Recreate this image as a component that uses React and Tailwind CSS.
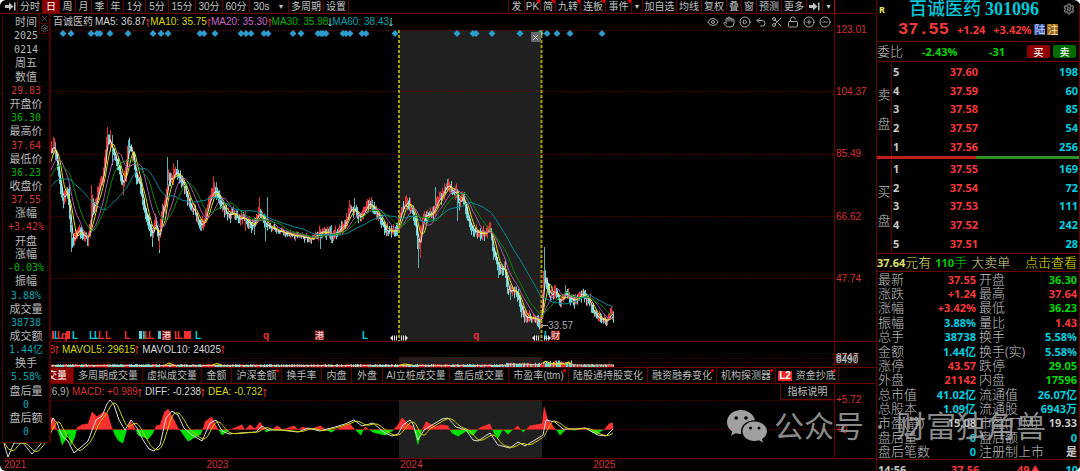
import { CirclePlay, CircleMinus, CirclePlus, Eye, Hand, LockOpen, Scissors, Settings, Undo2, X } from 'lucide-react';

const PERIODS = [
    { label: '分时', width: 'w-[25px]' },
    { label: '日', width: 'w-[17px]', active: true },
    { label: '周', width: 'w-4' },
    { label: '月', width: 'w-4' },
    { label: '季', width: 'w-4' },
    { label: '年', width: 'w-4' },
    { label: '1分', width: 'w-[22px]' },
    { label: '5分', width: 'w-[23px]' },
    { label: '15分', width: 'w-[27px]' },
    { label: '30分', width: 'w-[27px]' },
    { label: '60分', width: 'w-[27px]' },
    { label: '30s', width: 'w-[39px]', menu: true },
    { label: '多周期', width: 'w-[35px]' },
    { label: '设置', width: 'w-[25px]' },
];

const TOOLS = [
    { label: '发', width: 'w-4' },
    { label: 'PK', width: 'w-4', hot: true },
    { label: '简', width: 'w-[15px]', hot: true },
    { label: '九转', width: 'w-[25px]', hot: true },
    { label: '连板', width: 'w-[25px]', hot: true },
    { label: '事件', width: 'w-[26px]', hot: true },
    { label: '▼', width: 'w-[11px]', small: true },
    { label: '加自选', width: 'w-[34px]' },
    { label: '均线', width: 'w-[25px]' },
    { label: '复权', width: 'w-[25px]' },
    { label: '叠', width: 'w-[15px]' },
    { label: '窗', width: 'w-[15px]' },
    { label: '预测', width: 'w-[25px]' },
    { label: '更多', width: 'w-[25px]' },
];

const AVERAGES = [
    { text: 'MA5: 36.87', color: 'text-[#d8d8d8]', up: true },
    { text: 'MA10: 35.75', color: 'text-[#d8d800]', up: true },
    { text: 'MA20: 35.30', color: 'text-[#cc66cc]', up: true },
    { text: 'MA30: 35.98', color: 'text-[#00b400]', up: false },
    { text: 'MA60: 38.43', color: 'text-[#00a5b4]', up: false },
];

const DAY_DATA = [
    ['时间'], ['2025'], ['0214'], ['周五'],
    ['数值'], ['29.83', 'text-[#d83030]'],
    ['开盘价'], ['36.30', 'text-[#00b400]'],
    ['最高价'], ['37.64', 'text-[#d83030]'],
    ['最低价'], ['36.23', 'text-[#00b400]'],
    ['收盘价'], ['37.55', 'text-[#d83030]'],
    ['涨幅'], ['+3.42%', 'text-[#d83030]'],
    ['开盘'], ['涨幅'], ['-0.03%', 'text-[#00b400]'],
    ['振幅'], ['3.88%', 'text-[#00a5b4]'],
    ['成交量'], ['38738', 'text-[#00a5b4]'],
    ['成交额'], ['1.44亿', 'text-[#00a5b4]'],
    ['换手'], ['5.58%', 'text-[#00a5b4]'],
    ['盘后量'], ['0', 'text-[#00a5b4]'],
    ['盘后额'], ['0', 'text-[#00a5b4]'],
];

const TABS = [
    { label: '成交量', width: 'w-[71px]', active: true },
    { label: '多周期成交量', width: 'w-[69px]' },
    { label: '虚拟成交量', width: 'w-[59px]' },
    { label: '金额', width: 'w-[30px]' },
    { label: '沪深金额', width: 'w-[50px]', dot: true },
    { label: '换手率', width: 'w-10' },
    { label: '内盘', width: 'w-[30px]' },
    { label: '外盘', width: 'w-[31px]' },
    { label: 'AI立桩成交量', width: 'w-[67px]' },
    { label: '盘后成交量', width: 'w-[59px]' },
    { label: '市盈率(ttm)', width: 'w-[60px]', dot: true },
    { label: '陆股通持股变化', width: 'w-[79px]' },
    { label: '融资融券变化', width: 'w-[69px]', dot: true },
    { label: '机构探测器', width: 'w-[59px]', dot: true },
    { label: '资金抄底', width: 'w-[63px]', dot: true, level2: true },
];

const SELL = [['5', '37.60', '198'], ['4', '37.59', '60'], ['3', '37.58', '85'], ['2', '37.57', '54'], ['1', '37.56', '256']];
const BUY = [['1', '37.55', '169'], ['2', '37.54', '72'], ['3', '37.53', '111'], ['4', '37.52', '242'], ['5', '37.51', '28']];

const RED = 'text-[#f83838]';
const GREEN = 'text-[#00d800]';
const CYAN = 'text-[#00d0e0]';
const GREY = 'text-[#c8c8c8]';

const STATS = [
    ['最新', '37.55', RED, '开盘', '36.30', GREEN],
    ['涨跌', '+1.24', RED, '最高', '37.64', RED],
    ['涨幅', '+3.42%', RED, '最低', '36.23', GREEN],
    ['振幅', '3.88%', CYAN, '量比', '1.43', RED],
    ['总手', '38738', CYAN, '换手', '5.58%', CYAN],
    ['金额', '1.44亿', CYAN, '换手(实)', '5.58%', CYAN],
    ['涨停', '43.57', RED, '跌停', '29.05', GREEN],
    ['外盘', '21142', RED, '内盘', '17596', GREEN],
    ['总市值', '41.02亿', CYAN, '流通值', '26.07亿', CYAN],
    ['总股本', '1.09亿', CYAN, '流通股', '6943万', CYAN],
    ['市盈(静)', '15.08', GREY, '市盈(TTM)', '19.33', GREY],
    ['盘后量', '0', CYAN, '盘后额', '0', CYAN],
    ['盘后笔数', '0', CYAN, '注册制上市', '是', GREY],
];

// key points of the close price, [x, y] on the chart canvas
const PRICE = [
    [3, 200], [30, 192], [45, 172], [50, 150], [54, 146], [58, 168], [61, 190], [63, 200], [66, 190], [69, 198], [70, 225], [72, 242],
    [75, 238], [78, 228], [82, 234], [88, 239], [90, 226], [92, 202], [94, 210], [98, 193], [103, 175], [106, 150], [107, 134], [109, 142],
    [111, 145], [114, 155], [118, 165], [123, 188], [126, 170], [128, 145], [131, 150], [134, 160], [136, 180], [140, 182], [143, 205], [148, 222],
    [152, 236], [155, 222], [159, 242], [162, 212], [165, 205], [168, 178], [170, 180], [175, 172], [180, 177], [185, 190], [190, 205], [195, 212],
    [201, 228], [206, 215], [211, 195], [214, 190], [217, 194], [222, 205], [228, 216], [234, 213], [240, 220], [245, 219], [252, 227], [259, 212],
    [262, 217], [266, 225], [272, 229], [280, 231], [290, 234], [298, 236], [312, 239], [320, 232], [330, 232], [332, 238], [338, 231], [345, 223],
    [350, 210], [355, 211], [361, 219], [366, 206], [370, 204], [376, 212], [382, 222], [386, 231], [396, 232], [399, 220], [402, 209], [407, 201],
    [413, 212], [416, 225], [418, 248], [420, 240], [423, 218], [428, 213], [433, 214], [436, 202], [441, 198], [444, 190], [448, 184], [452, 191],
    [456, 191], [459, 205], [463, 196], [467, 215], [472, 229], [478, 233], [485, 233], [490, 229], [493, 250], [498, 267], [505, 271], [508, 290],
    [514, 290], [518, 296], [521, 310], [525, 318], [535, 318], [540, 323], [542, 308], [544, 268], [546, 283], [550, 296], [555, 290], [560, 303],
    [566, 293], [574, 302], [582, 294], [590, 303], [595, 315], [602, 320], [607, 322], [611, 313], [613, 316],
];

// long shadows: x, top, bottom, rising
const SPIKES = [
    [53, 137, 150, true], [55, 142, 160, false], [71, 225, 252, false], [91, 185, 210, true], [97, 190, 208, true], [107, 127, 145, true],
    [110, 130, 150, true], [112, 135, 165, false], [123, 180, 195, true], [128, 140, 160, false], [132, 147, 162, true], [159, 230, 250, true],
    [152, 228, 241, false], [167, 157, 185, false], [173, 163, 185, true], [177, 160, 180, false], [201, 220, 231, false], [213, 176, 195, true],
    [216, 182, 200, false], [259, 197, 215, true], [265, 220, 241, false], [267, 197, 225, false], [245, 215, 231, true], [254, 220, 235, false],
    [320, 235, 249, false], [331, 225, 243, false], [354, 198, 212, false], [349, 200, 214, true], [372, 200, 212, false], [367, 200, 210, true],
    [406, 195, 205, true], [410, 198, 210, true], [418, 240, 268, false], [420, 225, 258, true], [435, 187, 205, false], [444, 185, 200, true],
    [447, 179, 192, false], [457, 195, 221, false], [455, 186, 200, true], [498, 262, 278, false], [510, 285, 300, false], [544, 247, 290, false],
    [543, 280, 310, true], [555, 286, 294, true], [565, 285, 298, false],
];

const DIFF = [
    [3, 440], [8, 457], [14, 443], [23, 443], [32, 454], [40, 445], [46, 436], [53, 418], [57, 423], [62, 436], [68, 441], [74, 453], [80, 448],
    [88, 441], [96, 420], [102, 416], [107, 404], [110, 400], [114, 405], [119, 420], [125, 430], [131, 420], [137, 428], [143, 440], [149, 449],
    [154, 451], [160, 445], [166, 418], [172, 411], [178, 415], [184, 428], [192, 435], [202, 441], [210, 423], [216, 420], [222, 431], [229, 434],
    [240, 433], [256, 432], [262, 426], [268, 430], [280, 430], [298, 432], [308, 428], [320, 431], [327, 429], [335, 427], [345, 424], [354, 420],
    [362, 426], [373, 423], [385, 433], [392, 436], [398, 434], [403, 425], [410, 420], [413, 424], [418, 440], [424, 430], [432, 425], [442, 419],
    [448, 418], [456, 427], [466, 430], [473, 440], [478, 441], [484, 437], [490, 433], [498, 445], [510, 448], [518, 442], [525, 446], [535, 440],
    [543, 435], [546, 420], [555, 422], [563, 429], [575, 429], [585, 428], [598, 435], [606, 436], [613, 429],
];

const HIST = [
    [3, 0], [5, 12], [10, 14], [20, 0], [30, 8], [40, 0], [48, -10], [54, -12], [57, 0], [60, 8], [62, 16], [66, 10], [68, 4], [71, 16], [75, 8],
    [77, -2], [82, -5], [88, -6], [92, -18], [97, -13], [104, -18], [108, -16], [111, -5], [114, 4], [118, 11], [123, 14], [127, 0], [130, -9],
    [134, -4], [138, 6], [144, 8], [148, 10], [153, 4], [156, -4], [160, -5], [164, -17], [168, -21], [173, -12], [178, -2], [183, 5], [188, 12],
    [195, 8], [201, 5], [205, -8], [212, -13], [216, -4], [222, 6], [230, 0], [242, -5], [245, 0], [250, -5], [255, -1], [260, -8], [266, 3],
    [272, 0], [277, -4], [283, 0], [294, -4], [298, 0], [303, -3], [310, 0], [320, -4], [331, 3], [340, -2], [350, -6], [355, 0], [361, 6],
    [365, -3], [373, 3], [385, 6], [392, 2], [398, -5], [402, -12], [408, -6], [413, -3], [418, 16], [422, 0], [426, -8], [436, -3], [441, -5],
    [448, -4], [452, 4], [458, 7], [466, 2], [473, 6], [480, -2], [490, -6], [494, 4], [498, 9], [503, 0], [508, 5], [513, 0], [518, -4],
    [523, 3], [530, -4], [542, -6], [544, -24], [548, -10], [556, 0], [560, 6], [566, 0], [575, 1], [585, -2], [592, 3], [597, 5], [604, 0],
    [609, -6], [613, -7],
];

const DIAMONDS = [
    63, 71, 91, 97, 100, 110, 128, 153, 161, 168, 200, 204, 215, 241, 246, 251, 264, 268, 293, 301, 318, 321, 323, 326, 343, 346, 350,
    362, 366, 395, 457, 473, 476, 492, 520, 540, 547, 557, 570, 602,
];

const LETTERS = [
    [54, 'L', '#00c8d8'], [57, 'L', '#f03030'], [61, 'q', '#f03030'], [72, 'L', '#00c8d8'], [89, 'L', '#00c8d8'], [94, 'L', '#00c8d8'],
    [98, 'L', '#f03030'], [105, 'L', '#f03030'], [124, 'L', '#f03030'], [144, 'L', '#f03030'], [148, 'L', '#f03030'], [174, 'L', '#f03030'],
    [177, 'L', '#f03030'], [195, 'L', '#00c8d8'], [263, 'q', '#f03030'], [362, 'L', '#00c8d8'], [473, 'q', '#f03030'], [544, 'L', '#00c8d8'],
];

const FIRST = 3;
const LAST = 613;

const noise = (n) => {
    const v = Math.sin(n * 127.1) * 43758.5453;
    return v - Math.floor(v);
};

const sample = (points) => {
    const out = [];
    let i = 0;
    for (let x = FIRST; x <= LAST; x++) {
        while (i < points.length - 2 && points[i + 1][0] < x) i++;
        const [x0, y0] = points[i];
        const [x1, y1] = points[i + 1];
        out.push(y0 + ((y1 - y0) * (x - x0)) / (x1 - x0));
    }
    return out;
};

const average = (values, size) =>
    values.map((_, i) => {
        const part = values.slice(Math.max(0, i - size + 1), i + 1);
        return part.reduce((a, b) => a + b, 0) / part.length;
    });

const toPath = (values) => values.map((y, i) => `${i ? 'L' : 'M'}${i + FIRST} ${y.toFixed(1)}`).join('');

const base = sample(PRICE);
const closes = base.map((y, i) => y + (noise(i) - 0.5) * 4);
const candles = closes.map((y, i) => {
    const move = Math.abs((base[i + 1] ?? y) - base[i]);
    const wild = i > 265 && i < 315 ? 3 : 6;
    return {
        x: i + FIRST,
        top: y - 1 - noise(i + 900) * wild - move / 2,
        bottom: y + 1 + noise(i + 1700) * wild + move / 2,
        up: i === 0 || closes[i - 1] > y + (noise(i + 40) - 0.5) * 3,
    };
});
const diffLine = sample(DIFF);
const deaLine = average(diffLine, 9);
const hist = sample(HIST);
const histArea = (pick) => `M${FIRST} 429.5${hist.map((v, i) => `L${i + FIRST} ${(429.5 + pick(v)).toFixed(1)}`).join('')}L${LAST} 429.5Z`;

function Arrow({ up }) {
    return (
        <svg viewBox="0 0 4 9" className={`h-[9px] w-1 ${up ? 'text-[#e03030]' : 'text-[#70c8c8]'}`} fill="none" stroke="currentColor">
            <path d={up ? 'M2 9V1M0.5 3L2 1L3.5 3' : 'M2 0V8M0.5 6L2 8L3.5 6'} />
        </svg>
    );
}

function DockIcon() {
    return (
        <svg viewBox="0 0 11 9" className="h-[9px] w-[11px]" fill="currentColor">
            <path d="M0 3H4V0.5L8.5 4.5L4 8.5V6H0Z" />
            <rect x="9" y="0.5" width="1.5" height="8" />
        </svg>
    );
}

function ToolButton({ item }) {
    return (
        <button
            className={`relative flex shrink-0 items-center justify-center whitespace-nowrap border-r border-[#6a0000] ${item.width} ${item.active ? 'bg-[#8c0000] text-white' : ''} ${item.small ? 'text-[7px]' : ''}`}
        >
            {item.label}
            {item.menu && <span className="ml-2 text-[7px]">▼</span>}
            {item.hot && <span className="absolute right-0 top-0 border-l-4 border-t-4 border-l-transparent border-t-[#f00000]" />}
        </button>
    );
}

function Toolbar() {
    return (
        <div className="flex h-3.5 shrink-0 border-b border-[#6a0000] pr-[41px] text-[10px] leading-none text-[#c0c0c0]">
            <button aria-label="收起" className="flex w-[18px] items-center justify-center border-r border-[#6a0000] pl-1">
                <DockIcon />
            </button>
            {PERIODS.map((item) => <ToolButton key={item.label} item={item} />)}
            <div className="ml-auto flex border-l border-[#6a0000]">
                {TOOLS.map((item) => <ToolButton key={item.label} item={item} />)}
                <button aria-label="展开" className="flex w-4 items-center justify-center border-r border-[#6a0000]">
                    <DockIcon />
                </button>
                <button aria-label="菜单" className="w-3 border-r border-[#c00000] text-[7px]">▼</button>
            </div>
        </div>
    );
}

function InfoRow() {
    const icons = [Eye, Hand, CirclePlay, Undo2, Scissors, LockOpen, CirclePlus, CircleMinus];
    return (
        <div className="flex h-4 shrink-0 text-[10px] leading-none">
            <div className="flex min-w-0 flex-1 items-center pl-[50px]">
                <span className="mr-0.5 text-[#c0c0c0]">百诚医药</span>
                {AVERAGES.map((ma) => (
                    <span key={ma.text} className={`flex items-center whitespace-nowrap ${ma.color}`}>
                        {ma.text}
                        <Arrow up={ma.up} />
                    </span>
                ))}
                <div className="ml-auto flex gap-1 pr-[3px] text-[#a8a8a8]">
                    {icons.map((Icon, i) => (
                        <button key={i} aria-label={`工具${i + 1}`}><Icon size={12} /></button>
                    ))}
                </div>
            </div>
            <div className="w-[42px] border-l border-[#6a0000]" />
        </div>
    );
}

function Grip({ x, flip }) {
    return (
        <g transform={`translate(${x} 338) scale(${flip ? -1 : 1} 1)`} fill="#e0e0e0">
            <rect x="-3" y="-2.5" width="1" height="5" />
            <rect x="-1" y="-2.5" width="1" height="5" />
            <path d="M1 -3L4 0L1 3Z" />
        </g>
    );
}

function PriceChart() {
    return (
        <div className="flex min-h-0 flex-1 border-b border-[#6a0000]">
            <div className="relative min-w-0 flex-1">
                <svg viewBox="3 30 831 311" preserveAspectRatio="none" className="absolute inset-0 h-full w-full" fill="none">
                    <rect x="399" y="30" width="143" height="311" fill="#202020" />
                    {[30.5, 91.5, 154.5, 216.5, 278.5].map((y) => (
                        <path key={y} d={`M3 ${y}H834`} stroke="#700000" strokeWidth="1" strokeDasharray="1 1.5" />
                    ))}
                    {candles.map((c) => (
                        <path key={c.x} d={`M${c.x + 0.5} ${c.top}V${c.bottom}`} stroke={c.up ? '#f03838' : '#68d8d8'} />
                    ))}
                    {SPIKES.map(([x, top, bottom, up]) => (
                        <path key={x} d={`M${x + 0.5} ${top}V${bottom}`} stroke={up ? '#d83030' : '#58b0b0'} />
                    ))}
                    <path d={toPath(average(closes, 4))} stroke="#f0f0f0" />
                    <path d={toPath(average(closes, 8))} stroke="#e0e000" />
                    <path d={toPath(average(closes, 16))} stroke="#b058b0" />
                    <path d={toPath(average(closes, 24))} stroke="#009000" />
                    <path d={toPath(average(closes, 48))} stroke="#008c98" />
                    <path d="M399 30V341M541.500 30V341" stroke="#a0a000" strokeWidth="2" strokeDasharray="3 2" />
                    {DIAMONDS.map((x) => (
                        <path key={x} d={`M${x - 3.5} 33.5L${x} 30L${x + 3.5} 33.5L${x} 37Z`} fill="#2c9ccc" />
                    ))}
                    <path d="M538 33.5L540.5 31L543 33.5L540.5 36Z" fill="#80e080" />
                    <path d="M541 325.5H548M541 325.5L543 324M541 325.5L543 327" stroke="#a8a8a8" />
                    <text x="548" y="329" fontSize="10" fill="#a8a8a8">33.57</text>
                    <rect x="52" y="331" width="2" height="8" fill="#f03030" />
                    <rect x="66" y="331" width="4" height="8" fill="#f03030" />
                    <rect x="139" y="331" width="3" height="8" fill="#60d8d8" />
                    <rect x="143" y="331" width="2" height="8" fill="#00c8d8" />
                    <rect x="158" y="331" width="3" height="8" fill="#60c0d0" />
                    <rect x="184" y="331" width="7" height="8" fill="#f03030" />
                    {LETTERS.map(([x, char, color]) => (
                        <text key={x} x={x} y="339" fontSize="10" fontWeight="700" fill={color}>{char}</text>
                    ))}
                    {[[162, '港'], [315, '港'], [551, '财']].map(([x, char]) => (
                        <g key={x}>
                            <rect x={x} y="330.5" width="9" height="9.5" fill="#981818" />
                            <text x={x} y="338.5" fontSize="9" fill="#f0e0e0">{char}</text>
                        </g>
                    ))}
                    <Grip x={394} flip />
                    <Grip x={404} />
                    <Grip x={536} flip />
                    <Grip x={547} />
                </svg>
                <button aria-label="关闭区间" className="absolute left-[63.5%] top-0.5 flex size-2.5 items-center justify-center bg-[#686868] text-[#e0e0e0]">
                    <X size={9} />
                </button>
            </div>
            <div className="flex w-[42px] flex-col border-l border-[#6a0000] pl-px text-[10px] leading-none text-[#d83030]">
                {['123.01', '104.37', '85.49', '66.62', '47.74'].map((price) => (
                    <div key={price} className="flex-1"><span className="block -translate-y-1/2">{price}</span></div>
                ))}
            </div>
        </div>
    );
}

function VolumePane() {
    return (
        <div className="flex h-[25px] shrink-0">
            <div className="flex min-w-0 flex-1 flex-col">
                <div className="flex h-[15px] items-center gap-[3px] whitespace-nowrap text-[10px] leading-none text-[#d8d8d8]">
                    <span className="flex w-14 items-center justify-end text-[#d83030]">38738<Arrow up /></span>
                    <span className="flex items-center text-[#d8d800]">MAVOL5: 29615<Arrow up /></span>
                    <span className="flex items-center">MAVOL10: 24025<Arrow up /></span>
                </div>
                <svg viewBox="3 357 831 10" preserveAspectRatio="none" className="h-2.5 w-full" fill="none">
                    <rect x="399" y="357" width="143" height="10" fill="#202020" />
                    <path d="M3 358.5H834M3 362.5H834" stroke="#600000" strokeDasharray="1 1.5" />
                    {candles.map((c, i) => {
                        const burst = (c.x > 542 && c.x < 572) ? 2.5 : (c.x > 505 && c.x < 542) ? 1 : 0;
                        return <path key={c.x} d={`M${c.x + 0.5} 367V${365 - noise(i + 300) * (1 + burst) - burst / 2}`} stroke={c.up ? '#f03838' : '#68d8d8'} />;
                    })}
                    <path d="M52 365.5H399L500 365.5L520 364L540 365L545 361L553 364L567 363L577 365H613" stroke="#d8d8b0" strokeWidth="0.8" />
                    <path d="M165 365L169 363L174 365M212 365L217 363.5L222 365M400 365L404 364L412 365M543 364L546 361L550 364L566 364L568 362L572 364" stroke="#e0e000" />
                </svg>
            </div>
            <div className="flex w-[42px] items-end border-l border-[#6a0000] text-[10px] leading-none text-[#c0c0c0]">
                <div className="relative mb-0.5 h-[11px] w-[23px] border border-[#600000] bg-[#181818]">
                    <span className="absolute left-0 top-0">8490</span>
                    <span className="absolute -top-0.5 left-0">8747</span>
                </div>
            </div>
        </div>
    );
}

function TabBar() {
    return (
        <div className="flex h-[17px] shrink-0 border-y border-[#6a0000] text-[10px] leading-none text-[#b8b8b8]">
            {TABS.map((tab) => (
                <button
                    key={tab.label}
                    className={`relative flex shrink-0 items-center whitespace-nowrap border-r border-[#6a0000] ${tab.width} ${tab.active ? 'justify-end bg-[#8c0000] pr-1.5 text-white' : 'justify-center'}`}
                >
                    {tab.level2 && <span className="mr-1 bg-[#f02828] px-px text-[10px] font-bold text-white">L2</span>}
                    {tab.label}
                    {tab.dot && <span className="absolute right-0.5 top-px size-[3px] rounded-full bg-[#f00000]" />}
                </button>
            ))}
        </div>
    );
}

function MacdPane() {
    return (
        <div className="flex shrink-0 border-b border-[#6a0000]">
            <div className="min-w-0 flex-1">
                <div className="flex h-4 items-center gap-[3px] whitespace-nowrap text-[10px] leading-none text-[#d8d8d8]">
                    <span className="w-[66px] text-right text-[#b0b0b0]">(12,26,9)</span>
                    <span className="flex items-center text-[#d83030]">MACD: +0.989<Arrow up /></span>
                    <span className="flex items-center">DIFF: -0.238<Arrow up /></span>
                    <span className="flex items-center text-[#d8d800]">DEA: -0.732<Arrow up /></span>
                    <button className="ml-auto h-4 w-[54px] border-b border-l border-[#6a0000] text-[#c0c0c0]">指标说明</button>
                </div>
                <svg viewBox="3 400 831 58" preserveAspectRatio="none" className="h-[58px] w-full" fill="none">
                    <rect x="399" y="400" width="143" height="58" fill="#202020" />
                    <path d="M3 400.5H834M3 429.5H834" stroke="#700000" strokeDasharray="1 1.5" />
                    <path d={histArea((v) => Math.min(v, 0))} fill="#f83030" />
                    <path d={histArea((v) => Math.max(v, 0))} fill="#00e000" />
                    <path d={`M3 429.5H${LAST}`} stroke="#a02020" strokeWidth="0.8" />
                    <path d={toPath(diffLine)} stroke="#e0e0e0" />
                    <path d={toPath(deaLine)} stroke="#d0d000" />
                </svg>
            </div>
            <div className="flex w-[42px] flex-col border-l border-[#6a0000] pl-px pt-[11px] text-[10px] leading-none text-[#d83030]">
                <span>+5.72</span>
                <span className="mt-5">+0</span>
            </div>
        </div>
    );
}

function DayPanel() {
    return (
        <div className="absolute bottom-7 left-0.5 top-3.5 flex w-[49px] flex-col border-b border-l border-r-2 border-[#500000] bg-black pb-[3px] pt-0.5 text-center">
            {DAY_DATA.map(([text, color], i) => (
                <div
                    key={i}
                    className={`flex min-h-0 flex-1 items-center justify-center whitespace-nowrap leading-none ${/^[-+\d]/.test(text) ? 'font-["DejaVu_Sans_Mono","Noto_Sans_CJK_SC",monospace] text-[10px]' : 'text-[11px]'} ${color || 'text-[#b8b8b8]'}`}
                >
                    {text}
                </div>
            ))}
            <div className="absolute right-0 top-0 flex flex-col text-[#888888]">
                <button aria-label="关闭" className="border-b border-l border-[#500000]"><X size={9} strokeWidth={1.5} /></button>
                <button aria-label="设置" className="border-b border-l border-[#500000]"><Settings size={9} strokeWidth={1.5} /></button>
            </div>
        </div>
    );
}

function OrderBook({ name, rows }) {
    return (
        <div className="flex h-[94px] shrink-0">
            <div className="flex w-[15px] flex-col items-center justify-center gap-4 border-r border-[#6a0000] text-[13px] font-light leading-none text-[#c0c0c0]">
                {name.split('').map((char) => <span key={char}>{char}</span>)}
            </div>
            <table className="h-full flex-1 text-[11px] font-bold leading-none">
                <tbody>
                    {rows.map(([level, price, amount]) => (
                        <tr key={level}>
                            <td className="w-10 p-0 pl-px text-[#c8c8c8]">{level}</td>
                            <td className="w-[46px] p-0 text-right text-[#f83838]">{price}</td>
                            <td className="p-0 pr-px text-right text-[#00d0e0]">{amount}</td>
                        </tr>
                    ))}
                </tbody>
            </table>
        </div>
    );
}

function QuotePanel() {
    return (
        <aside className='flex w-[204px] shrink-0 flex-col overflow-hidden border-x border-[#6a0000] font-["Noto_Sans","Noto_Sans_CJK_SC",sans-serif] text-[11px] leading-none'>
            <div className="flex h-[41px] shrink-0 flex-col">
                <div className="flex h-[18px] items-center">
                    <span className="w-8 pl-0.5 text-[9px] font-bold text-[#e8e860]">R</span>
                    <h1 className='flex items-center gap-1 whitespace-nowrap font-["Liberation_Serif","Noto_Sans_CJK_SC",serif] text-[18px] font-bold text-[#00c8d8]'>
                        <span className="font-medium">百诚医药</span>
                        <span>301096</span>
                    </h1>
                    <button aria-label="设置" className="ml-auto mr-1 text-[#707070]"><Settings size={12} strokeWidth={3} /></button>
                </div>
                <div className="flex h-[23px] items-center pl-[21px] font-bold text-[#f83838]">
                    <span className='font-["Liberation_Mono",monospace] text-[17px]'>37.55</span>
                    <span className="ml-2">+1.24</span>
                    <span className="ml-2">+3.42%</span>
                    <span className="ml-[3px] bg-[#2848a0] text-[11px] font-normal text-[#d8d8f0]">陆</span>
                    <span className="ml-0.5 bg-[#a06810] text-[11px] font-normal text-[#f0e0c0]">注</span>
                </div>
            </div>
            <div className="flex h-[21px] shrink-0 items-center border-y border-[#6a0000] font-bold text-[#00d800]">
                <span className="w-[45px] text-[13px] font-light text-[#c0c0c0]">委比</span>
                <span className="w-[67px]">-2.43%</span>
                <span>-31</span>
                <button className="ml-auto mr-[3px] h-[13px] w-[23px] rounded-xs bg-[#900000] text-[10px] font-medium text-white">买</button>
                <button className="mr-[3px] h-[13px] w-[23px] rounded-xs bg-[#006c00] text-[10px] font-medium text-white">卖</button>
            </div>
            <OrderBook name="卖盘" rows={SELL} />
            <div className="flex h-[3px] shrink-0">
                <div className="w-[49%] bg-[#c02020]" />
                <div className="flex-1 bg-[#309028]" />
            </div>
            <OrderBook name="买盘" rows={BUY} />
            <div className="flex h-[19px] shrink-0 items-center whitespace-nowrap border-y border-[#6a0000] pr-0.5 text-[13px] font-light text-[#e0e060]">
                <span className="text-[11px] font-bold">37.64</span>
                <span>元有</span>
                <span className="ml-1 text-[11px] font-bold text-[#00c800]">110</span>
                <span className="text-[#00c800]">手</span>
                <span className="ml-1 text-[#d8d890]">大卖单</span>
                <a href="#detail" className="ml-auto text-[#e0e000]">点击查看</a>
            </div>
            <table className="h-[187px] w-full shrink-0 table-fixed whitespace-nowrap font-bold">
                <tbody>
                    {STATS.map(([nameA, valueA, colorA, nameB, valueB, colorB]) => (
                        <tr key={nameA}>
                            <th className="p-0 pl-px text-left text-[13px] font-light leading-none text-[#c0c0c0]">{nameA}</th>
                            <td className={`p-0 pr-0.5 text-right ${colorA}`}>{valueA}</td>
                            <th className="p-0 pl-px text-left text-[13px] font-light leading-none text-[#c0c0c0]">{nameB}</th>
                            <td className={`p-0 pr-0.5 text-right ${colorB}`}>{valueB}</td>
                        </tr>
                    ))}
                </tbody>
            </table>
            <div className="flex shrink-0 border-t border-[#6a0000] pt-1 font-bold">
                <span className="w-[74px] pl-px text-[#c8c8c8]">14:56</span>
                <span className="w-[66px] text-[#f83838]">37.56</span>
                <span className="text-[#f83838]">49▲</span>
                <span className="ml-auto pr-px text-[#00d0e0]">10</span>
            </div>
        </aside>
    );
}

function Watermark() {
    return (
        <div className="pointer-events-none absolute bottom-7 right-[34px] flex items-center gap-3.5 whitespace-nowrap text-[30px] leading-none text-[#b0b0b0]/80">
            <svg viewBox="0 0 40 33" className="-mr-[7px] h-[33px] w-10">
                <path fill="#a0a0a0" fillRule="evenodd" d="M14 0C6 0 0 5.500 0 12.200C0 16 2 19.300 5.200 21.600L4 25.600L8.800 23.200C10.500 23.800 12.200 24 14.200 24C12.500 16.500 19 10.200 28 10.300C26.500 4.200 20.800 0 14 0ZM9.200 6.200A1.800 1.800 0 1 1 9.200 9.800A1.800 1.800 0 1 1 9.200 6.200ZM19 6.200A1.800 1.800 0 1 1 19 9.800A1.800 1.800 0 1 1 19 6.200Z" />
                <path fill="#a0a0a0" fillRule="evenodd" d="M27.500 11.500C20.500 11.500 15.500 16 15.500 21.300C15.500 26.800 20.500 31 27.500 31C29 31 30.500 30.800 32 30.300L36 32.500L35 29C38 27.200 40 24.500 40 21.300C40 16 34.500 11.500 27.500 11.500ZM23.500 16.500A1.500 1.500 0 1 1 23.500 19.500A1.500 1.500 0 1 1 23.500 16.500ZM32 16.500A1.500 1.500 0 1 1 32 19.500A1.500 1.500 0 1 1 32 16.500Z" />
            </svg>
            <span>公众号</span>
            <span className="size-1 rounded-full bg-[#b0b0b0]/80" />
            <span>财富独角兽</span>
        </div>
    );
}

export default function App() {
    return (
        <div className="h-screen bg-white">
            <div className='relative flex h-full overflow-hidden rounded-md bg-black font-["Liberation_Sans","Noto_Sans_CJK_SC",sans-serif]'>
                <main className="flex min-w-0 flex-1 flex-col">
                    <Toolbar />
                    <div className="flex min-h-0 flex-1 flex-col pl-[3px]">
                        <InfoRow />
                        <PriceChart />
                        <VolumePane />
                        <TabBar />
                        <MacdPane />
                        <div className="relative h-3 shrink-0 text-[10px] leading-3 text-[#d83030]">
                            <span className="absolute left-px">2021</span>
                            <span className="absolute left-[23.3%]">2023</span>
                            <span className="absolute left-[45.5%]">2024</span>
                            <span className="absolute left-[67.6%]">2025</span>
                        </div>
                    </div>
                </main>
                <QuotePanel />
                <DayPanel />
                <Watermark />
            </div>
        </div>
    );
}
